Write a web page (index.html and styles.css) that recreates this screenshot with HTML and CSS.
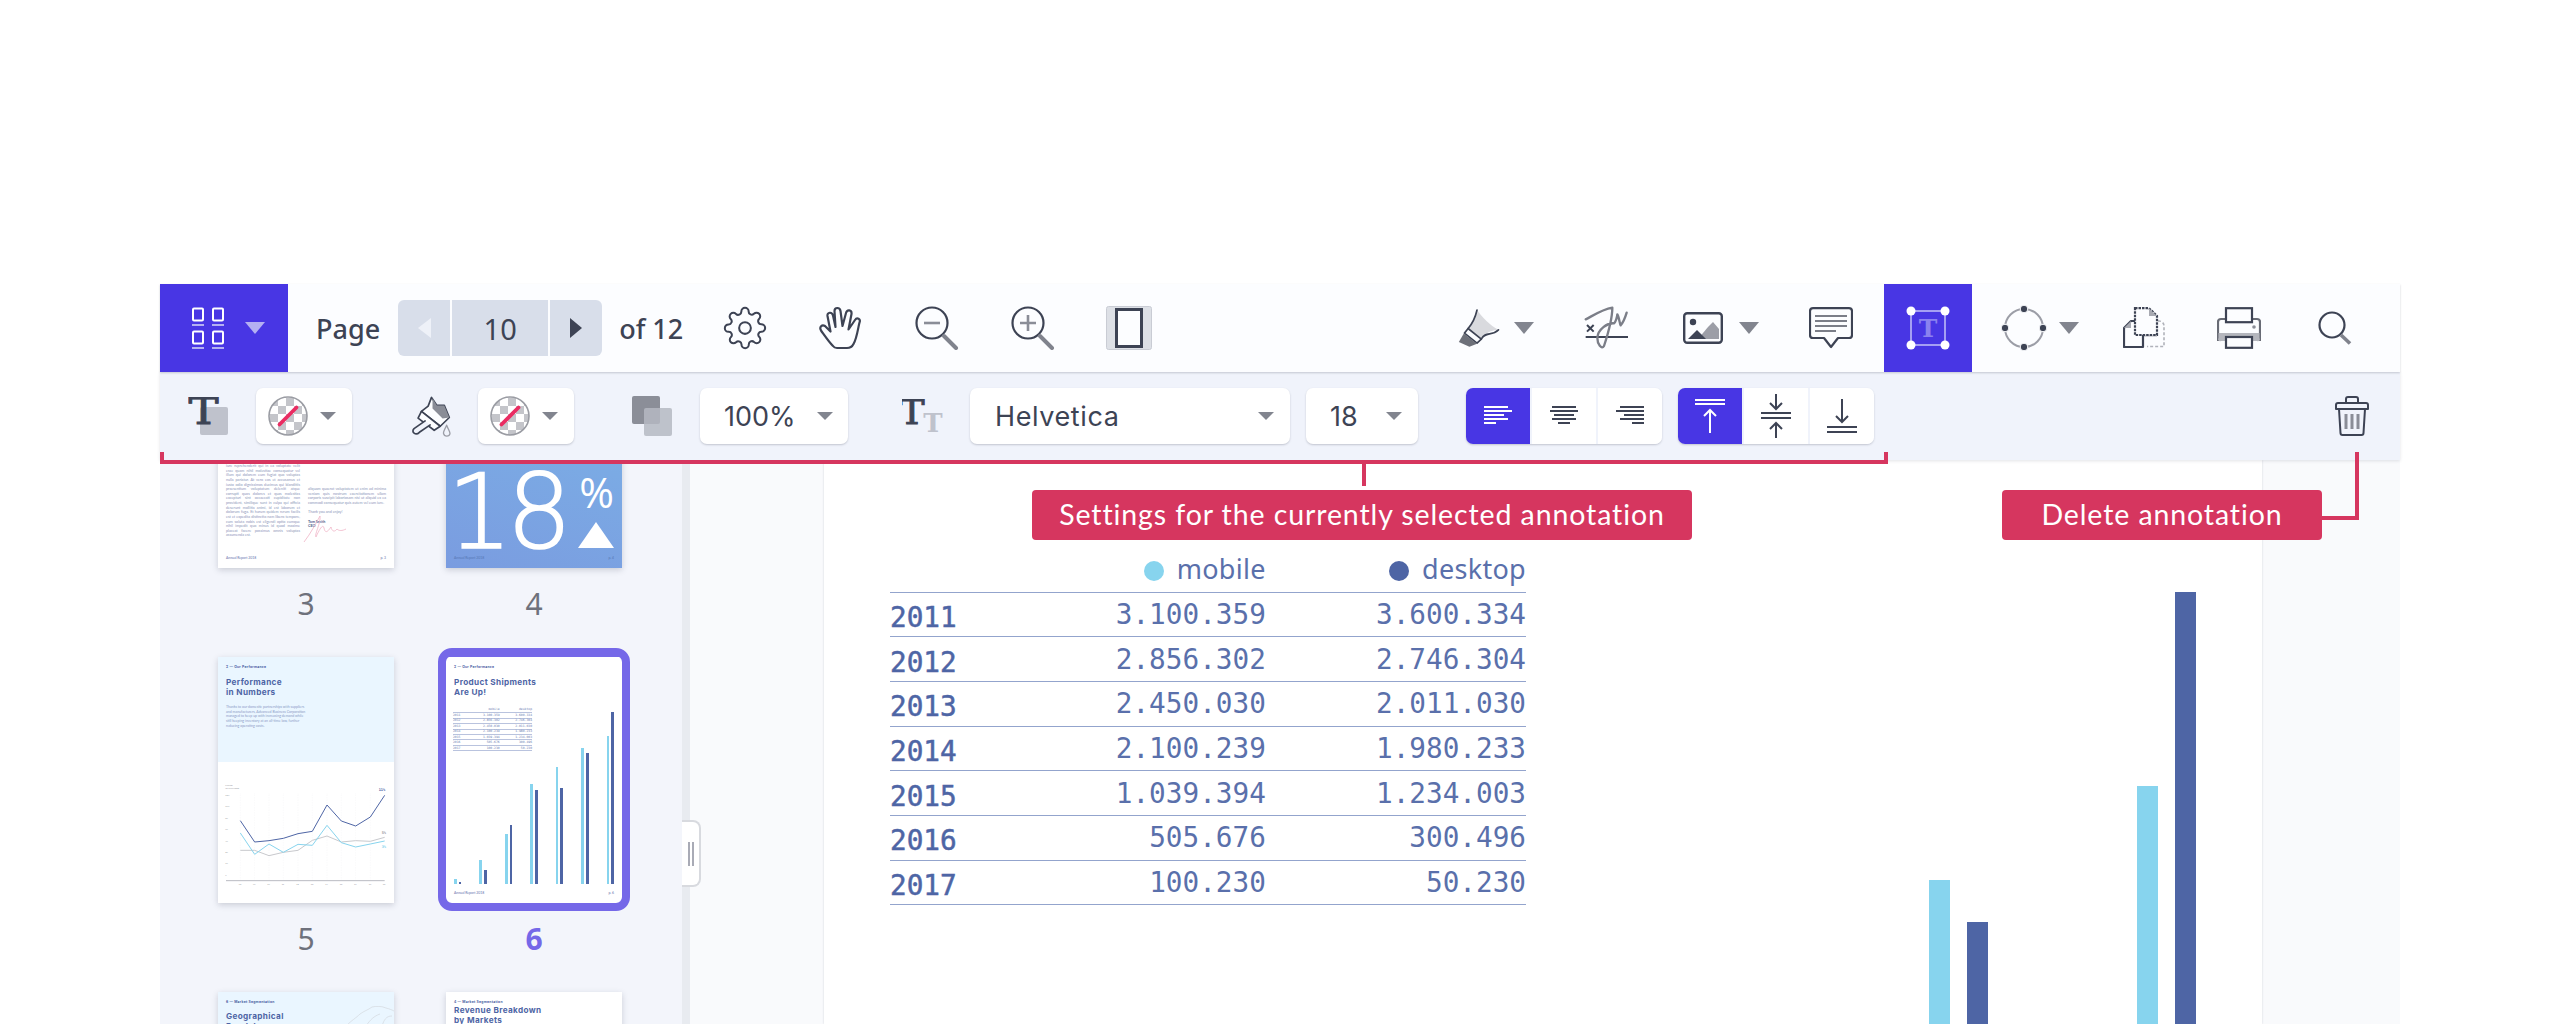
FILE: index.html
```html
<!DOCTYPE html>
<html lang="en">
  <head>
    <meta charset="UTF-8" />
    <title>PDF viewer annotation toolbar</title>
    <link rel="stylesheet" href="styles.css">
  </head>
  <body>
    <div class="app">
      <!-- main toolbar -->
      <div class="bar bar-main">
        <button class="grid-btn">
          <svg width="32" height="42" viewBox="0 0 32 42" fill="none" stroke="#fff" stroke-width="2">
            <rect x="1" y="1.5" width="10" height="12" rx="1"/><rect x="21" y="1.5" width="10" height="12" rx="1"/>
            <rect x="1" y="24.5" width="10" height="12" rx="1"/><rect x="21" y="24.5" width="10" height="12" rx="1"/>
            <path d="M0 18h12M20 18h12M0 41h12M20 41h12" stroke="#b4b0f2"/>
          </svg>
          <i class="caret caret-lg caret-light"></i>
        </button>
        <span class="page-word">Page</span>
        <div class="stepper">
          <span class="step"><i class="tri tri-left"></i></span>
          <span class="step step-num">10</span>
          <span class="step"><i class="tri tri-right"></i></span>
        </div>
        <span class="page-of">of 12</span>
        <span class="tool">
          <svg width="44" height="44" viewBox="0 0 24 24" fill="none" stroke="#3d4354" stroke-width="1.1" stroke-linejoin="round"><circle cx="12" cy="12" r="3.2"/><path d="M19.4 15a1.65 1.65 0 0 0 .33 1.82l.06.06a2 2 0 0 1 0 2.83 2 2 0 0 1-2.83 0l-.06-.06a1.65 1.65 0 0 0-1.82-.33 1.65 1.65 0 0 0-1 1.51V21a2 2 0 0 1-2 2 2 2 0 0 1-2-2v-.09A1.65 1.65 0 0 0 9 19.4a1.65 1.65 0 0 0-1.82.33l-.06.06a2 2 0 0 1-2.83 0 2 2 0 0 1 0-2.83l.06-.06a1.65 1.65 0 0 0 .33-1.82 1.65 1.65 0 0 0-1.51-1H3a2 2 0 0 1-2-2 2 2 0 0 1 2-2h.09A1.65 1.65 0 0 0 4.6 9a1.65 1.65 0 0 0-.33-1.82l-.06-.06a2 2 0 0 1 0-2.83 2 2 0 0 1 2.83 0l.06.06a1.65 1.65 0 0 0 1.82.33H9a1.65 1.65 0 0 0 1-1.51V3a2 2 0 0 1 2-2 2 2 0 0 1 2 2v.09a1.65 1.65 0 0 0 1 1.51 1.65 1.65 0 0 0 1.82-.33l.06-.06a2 2 0 0 1 2.83 0 2 2 0 0 1 0 2.83l-.06.06a1.65 1.65 0 0 0-.33 1.82V9a1.65 1.65 0 0 0 1.51 1H21a2 2 0 0 1 2 2 2 2 0 0 1-2 2h-.09a1.65 1.65 0 0 0-1.51 1z"/></svg>
        </span>
        <span class="tool">
          <svg width="44" height="44" viewBox="0 0 44 44" fill="none" stroke="#3d4354" stroke-width="2.2" stroke-linejoin="round" stroke-linecap="round"><path d="M14 40C10 36 6 30 2 24.5C0 21 3 18 6 20L11.5 25.5L8.5 10C8 6 13 5.5 14 9.5L16.5 21L15.5 5C15.5 1 21 1 21.5 5L23.5 20L27 7C28 3 33 3.5 32.5 8L29.5 23.5L36 14C38 11 42 13 40.5 16.5C39 22 38 32 34.5 38C33 41 30 42 28 42L18 42C16.5 42 15 41.5 14 40Z"/></svg>
        </span>
        <span class="tool">
          <svg width="44" height="44" viewBox="0 0 44 44" fill="none"><circle cx="17" cy="17" r="15.5" stroke="#3d4354" stroke-width="2.2"/><path d="M9 17h16" stroke="#8a8d97" stroke-width="2.6"/><path d="M29 30l12 12" stroke="#80838d" stroke-width="4" stroke-linecap="round"/></svg>
        </span>
        <span class="tool">
          <svg width="44" height="44" viewBox="0 0 44 44" fill="none"><circle cx="17" cy="17" r="15.5" stroke="#3d4354" stroke-width="2.2"/><path d="M9 17h16M17 9v16" stroke="#8a8d97" stroke-width="2.6"/><path d="M29 30l12 12" stroke="#80838d" stroke-width="4" stroke-linecap="round"/></svg>
        </span>
        <span class="tool">
          <svg width="46" height="44" viewBox="0 0 46 44"><rect x="0.5" y="0.5" width="45" height="43" rx="2" fill="#dde0e6" stroke="#c9ccd4"/><rect x="10.5" y="3.500" width="25" height="37" fill="#fcfdff" stroke="#3d4354" stroke-width="3"/></svg>
        </span>

        <div class="bar-right">
          <span class="tool-flex tool-hl">
            <svg width="42" height="38" viewBox="28 25 126 115" fill="none" stroke="#3d4354" stroke-width="5" stroke-linejoin="round" stroke-linecap="round"><path d="M85 28C80 50 72 68 58 84L98 116C105 100 125 90 150 88C125 75 100 50 85 28Z" fill="#d9dade" stroke="none"/><path d="M85 28C80 50 72 68 58 84M98 116C110 92 130 108 150 88"/><path d="M58 84L98 116L85 128L47 98Z" fill="#fcfdff"/><path d="M45 99L85 130L62 139L30 125Z" fill="#6d7079" stroke="none"/></svg>
            <i class="caret caret-lg"></i>
          </span>
          <span class="tool-flex tool-sign">
            <svg width="45" height="45" viewBox="405 20 135 135" fill="none"><path d="M410 113H537" stroke="#3d4354" stroke-width="6"/><path d="M414 77l20 20M434 77l-20 20" stroke="#3d4354" stroke-width="6"/><path d="M410 60C430 50 460 30 490 25C490 50 478 100 465 140C458 152 445 135 445 115C447 90 475 70 495 72C500 70 505 50 505 45C510 50 512 75 515 78C522 70 530 50 533 40" stroke="#7b7e88" stroke-width="7" stroke-linejoin="round" stroke-linecap="round"/></svg>
          </span>
          <span class="tool-flex tool-img">
            <svg width="40" height="32" viewBox="0 0 40 32"><rect x="1.2" y="1.2" width="37.6" height="29.6" rx="3" fill="none" stroke="#3d4354" stroke-width="2.4"/><circle cx="10" cy="10" r="3.2" fill="#3d4354"/><path d="M15 27L25 15L30 10L36 17V27Z" fill="#9c9ea7"/><path d="M5 27L14 18L23 27Z" fill="#3d4354"/></svg>
            <i class="caret caret-lg"></i>
          </span>
          <span class="tool-flex tool-note">
            <svg width="44" height="42" viewBox="0 0 44 42" fill="none"><path d="M4 1.2H40A3 3 0 0 1 43 4.200V28A3 3 0 0 1 40 31H29L22 40L15 31H4A3 3 0 0 1 1 28V4.200A3 3 0 0 1 4 1.200Z" stroke="#3d4354" stroke-width="2.200" stroke-linejoin="round"/><path d="M6 9h32M6 14h32M6 19h32M6 24h21" stroke="#7b7e88" stroke-width="2"/></svg>
          </span>
          <span class="tool-box">
            <svg width="48" height="48" viewBox="0 0 48 48"><rect x="7" y="7" width="34" height="34" fill="none" stroke="#a59ff3" stroke-width="2"/><text x="24" y="33" text-anchor="middle" class="icon-t" font-size="25" fill="#8b82ef">T</text><circle cx="7" cy="7" r="4.500" fill="#fff"/><circle cx="41" cy="7" r="4.500" fill="#fff"/><circle cx="7" cy="41" r="4.500" fill="#fff"/><circle cx="41" cy="41" r="4.500" fill="#fff"/></svg>
          </span>
          <span class="tool-flex tool-shape">
            <svg width="46" height="46" viewBox="0 0 46 46" fill="none"><circle cx="23" cy="23" r="19" stroke="#9c9ea7" stroke-width="2"/><g fill="#3d4354"><circle cx="23" cy="4" r="3.800" stroke="#fcfdff" stroke-width="1"/><circle cx="23" cy="42" r="3.800" stroke="#fcfdff" stroke-width="1"/><circle cx="4" cy="23" r="3.800" stroke="#fcfdff" stroke-width="1"/><circle cx="42" cy="23" r="3.800" stroke="#fcfdff" stroke-width="1"/></g></svg>
            <i class="caret caret-xl"></i>
          </span>
          <span class="tool-flex tool-copy">
            <svg width="42" height="42" viewBox="0 0 42 42" fill="none"><path d="M14 14H34V30H14Z" fill="#d4d5da"/><path d="M30 14h6a5 5 0 0 1 5 5v20.500H24" stroke="#b0b2ba" stroke-width="1.600" stroke-dasharray="3 2"/><path d="M8 14H20V40H1V21Z" fill="#fcfdff" stroke="#3d4354" stroke-width="2.200" stroke-linejoin="round"/><path d="M8 14L1 21H8Z" fill="#a8aab2"/><path d="M12 1.200H26L34 9V28H12Z" fill="#fcfdff" stroke="#3d4354" stroke-width="2.200" stroke-dasharray="2.500 1"/><path d="M26 1.200V9H34Z" fill="#a8aab2"/></svg>
          </span>
          <span class="tool-flex tool-print">
            <svg width="44" height="42" viewBox="0 0 44 42" fill="none"><path d="M4 12H40A3 3 0 0 1 43 15V33H1V15A3 3 0 0 1 4 12Z" fill="#fcfdff" stroke="#686b75" stroke-width="2.200"/><path d="M1.500 26H42.500V31A2 2 0 0 1 40 34H4A2 2 0 0 1 1.500 31Z" fill="#b4b6bd"/><rect x="9" y="1.200" width="26" height="14" fill="#fcfdff" stroke="#3d4354" stroke-width="2.200"/><rect x="9" y="30" width="26" height="10.800" fill="#fcfdff" stroke="#3d4354" stroke-width="2.200"/><circle cx="37" cy="20" r="1.800" fill="#8a8d97"/></svg>
          </span>
          <span class="tool-flex tool-find">
            <svg width="34" height="34" viewBox="0 0 34 34" fill="none"><circle cx="14" cy="14" r="12.500" stroke="#3d4354" stroke-width="2.200"/><path d="M23 24l9 8.500" stroke="#80838d" stroke-width="3.600"/></svg>
          </span>
        </div>
      </div>

      <!-- annotation settings -->
      <div class="bar bar-sub">
        <svg class="ic-text" width="40" height="38" viewBox="0 0 40 38"><rect x="12" y="10" width="28" height="28" rx="2" fill="#bfc2cc"/><text transform="translate(15.5 27) scale(1.22 1)" text-anchor="middle" class="icon-t icon-t-dark" font-size="37">T</text></svg>
        <div class="ctl ctl-pick">
          <svg width="40" height="40" viewBox="0 0 40 40"><defs><pattern id="chk" x="2" y="2" width="16" height="16" patternUnits="userSpaceOnUse"><rect width="16" height="16" fill="#fff"/><rect width="8" height="8" fill="#c4c5ca"/><rect x="8" y="8" width="8" height="8" fill="#c4c5ca"/></pattern></defs><circle cx="20" cy="20" r="19" fill="url(#chk)" stroke="#9a9ca3" stroke-width="1.600"/><path d="M11.500 28.500L28.500 11.500" stroke="#ea2c62" stroke-width="3.800" stroke-linecap="round"/></svg>
          <i class="caret"></i>
        </div>
        <svg class="ic-paint" width="42" height="42" viewBox="688 15 125 125" fill="none" stroke="#3d4354" stroke-width="5" stroke-linejoin="round" stroke-linecap="round"><path d="M752 22L742 48L722 64L778 108L805 82L790 46L768 46Z" fill="#fcfdff"/><path d="M755 25L768 46L790 46L805 82L785 85L755 55Z" fill="#8a8d97" stroke="none"/><path d="M722 64L712 84L760 120L778 108Z" fill="#fcfdff"/><path d="M733 92L700 115C690 125 705 137 716 126L748 104" fill="#f0f3fb"/><path d="M797 105C790 120 786 125 788 130C790 140 805 140 807 130C808 125 803 120 797 105Z" stroke="#9c9ea7" stroke-width="4"/></svg>
        <div class="ctl ctl-pick ctl-pick-2">
          <svg width="40" height="40" viewBox="0 0 40 40"><circle cx="20" cy="20" r="19" fill="url(#chk)" stroke="#9a9ca3" stroke-width="1.600"/><path d="M11.500 28.500L28.500 11.500" stroke="#ea2c62" stroke-width="3.800" stroke-linecap="round"/></svg>
          <i class="caret"></i>
        </div>
        <svg class="ic-opacity" width="40" height="40" viewBox="0 0 40 40"><rect x="0" y="0" width="28" height="28" rx="2" fill="#8b8e98"/><rect x="12" y="12" width="28" height="28" rx="2" fill="#b5b8c2" fill-opacity="0.85"/></svg>
        <div class="ctl ctl-pct"><span>100%</span><i class="caret"></i></div>
        <svg class="ic-size" width="42" height="34" viewBox="0 0 42 34"><text transform="translate(10 25) scale(1.15 1)" text-anchor="middle" class="icon-t icon-t-dark" font-size="33">T</text><text x="31" y="33" text-anchor="middle" class="icon-t" font-size="26" fill="#bfc2cc">T</text></svg>
        <div class="ctl ctl-font"><span>Helvetica</span><i class="caret"></i></div>
        <div class="ctl ctl-num"><span>18</span><i class="caret"></i></div>

        <div class="seg seg-h">
          <span class="seg-btn active"><svg width="28" height="20" viewBox="0 0 28 20" fill="#fff"><rect width="24" height="2"/><rect y="4" width="28" height="2"/><rect y="8" width="20" height="2"/><rect y="12" width="24" height="2"/><rect y="16" width="12" height="2"/></svg></span>
          <span class="seg-btn"><svg width="28" height="20" viewBox="0 0 28 20" fill="#3d4354"><rect x="2" width="24" height="2"/><rect y="4" width="28" height="2"/><rect x="4" y="8" width="20" height="2"/><rect x="2" y="12" width="24" height="2"/><rect x="8" y="16" width="12" height="2"/></svg></span>
          <span class="seg-btn"><svg width="28" height="20" viewBox="0 0 28 20" fill="#3d4354"><rect x="4" width="24" height="2"/><rect y="4" width="28" height="2"/><rect x="8" y="8" width="20" height="2"/><rect x="4" y="12" width="24" height="2"/><rect x="16" y="16" width="12" height="2"/></svg></span>
        </div>
        <div class="seg seg-v">
          <span class="seg-btn active"><svg width="30" height="34" viewBox="0 0 30 34" fill="none" stroke="#fff" stroke-width="2"><path d="M0 1h30M0 5h30M15 34V11M9 17l6-6 6 6"/></svg></span>
          <span class="seg-btn"><svg width="30" height="44" viewBox="0 0 30 44" fill="none" stroke="#3d4354" stroke-width="2"><path d="M0 19h30M0 24h30M15 0v15M9 9l6 6 6-6M15 44V29M9 35l6-6 6 6"/></svg></span>
          <span class="seg-btn"><svg width="30" height="34" viewBox="0 0 30 34" fill="none" stroke="#3d4354" stroke-width="2"><path d="M0 28h30M0 33h30M15 0v23M9 17l6 6 6-6"/></svg></span>
        </div>
        <svg class="ic-trash" width="34" height="40" viewBox="0 0 34 40" fill="none" stroke="#3d4354" stroke-width="2" stroke-linejoin="round"><path d="M11 7V3A2 2 0 0 1 13 1H21A2 2 0 0 1 23 3V7"/><path d="M3 7H31A2 2 0 0 1 33 9V13H1V9A2 2 0 0 1 3 7Z"/><path d="M4 13L5.500 37A2 2 0 0 0 7.500 39H26.500A2 2 0 0 0 28.500 37L30 13"/><path d="M11 18V33M17 18V33M23 18V33" stroke="#8a8d97" stroke-width="3"/></svg>
      </div>

      <div class="content">
        <aside class="sidebar">
          <div class="thumbs">
            <div class="cell">
              <div class="thumb thumb-letter">
                <div class="letter-cols">
                  <p>nostrum exercitationem ullam corporis suscipit laboriosam, nisi ut aliquid ex ea commodi consequatur quis autem vel eum iure reprehenderit qui in ea voluptate velit esse quam nihil molestiae consequatur vel illum qui dolorem eum fugiat quo voluptas nulla pariatur. At vero eos et accusamus et iusto odio dignissimos ducimus qui blanditiis praesentium voluptatum deleniti atque corrupti quos dolores et quas molestias excepturi sint occaecati cupiditate non provident, similique sunt in culpa qui officia deserunt mollitia animi, id est laborum et dolorum fuga. Et harum quidem rerum facilis est et expedita distinctio nam libero tempore, cum soluta nobis est eligendi optio cumque nihil impedit quo minus id quod maxime placeat facere possimus omnis voluptas assumenda est.</p>
                  <p>aliquam quaerat voluptatem ut enim ad minima veniam quis nostrum exercitationem ullam corporis suscipit laboriosam nisi ut aliquid ex ea commodi consequatur quis autem vel eum iure.<br><br>Thank you and enjoy!<br><br><b>Tom Smith</b><br><b>CEO</b><br><br><br></p>
                </div>
                <svg class="scribble" width="44" height="28" viewBox="0 0 44 28" fill="none" stroke="#f0b4c6" stroke-width="0.8"><path d="M1 27C8 18 13 8 17 1C18 8 11 20 13 22C16 15 20 8 21 13C22 18 24 18 28 12C29 17 32 17 34 14C36 16 39 16 43 14"/></svg>
                <div class="thumb-foot"><span>Annual Report 2018</span><span>p. 3</span></div>
              </div>
              <div class="num">3</div>
            </div>
            <div class="cell">
              <div class="thumb thumb-stat">
                <div class="stat">
                  <span class="stat-big">18</span>
                  <div class="stat-side"><span class="stat-pct">%</span><i class="stat-up"></i></div>
                </div>
                <div class="thumb-foot"><span>Annual Report 2018</span><span>p. 4</span></div>
              </div>
              <div class="num">4</div>
            </div>
            <div class="cell">
              <div class="thumb">
                <div class="thumb-head tint">
                  <div class="kicker">2 — Our Performance</div>
                  <div class="title">Performance<br>in Numbers</div>
                  <p class="blurb">Thanks to our domestic partnerships with suppliers and manufacturers, Advanced Business Corporation managed to keep up with increasing demand while still keeping inventory at an all-time low, further reducing operating costs.</p>
                </div>
                <svg class="line-chart" width="176" height="141" viewBox="54 365 528 423" fill="none">
                  <path d="M121 460V720M164 460V720M207 460V720M250 460V720M294 460V720M337 460V720M381 460V720M424 460V720M467 460V720M511 460V720" stroke="#e6e7ea" stroke-dasharray="2 3"/>
                  <path d="M78 721H554" stroke="#b9bbc2" stroke-width="3"/>
                  <polyline points="121,630 164,630 207,646 250,636 294,630 337,600 381,587 424,605 467,601 511,603 554,591" stroke="#c8c9cd" stroke-width="3"/>
                  <polyline points="121,578 164,642 207,611 250,636 294,612 337,615 381,555 424,607 467,620 511,611 554,602" stroke="#87d4ee" stroke-width="3"/>
                  <polyline points="121,541 164,605 207,601 250,594 294,580 337,573 381,494 424,542 467,557 511,530 554,465" stroke="#4e65a5" stroke-width="3"/>
                  <g class="chart-lbl"><text x="536" y="453" fill="#4e65a5">11%</text><text x="545" y="580" fill="#9a9ca3">5%</text><text x="545" y="623" fill="#87d4ee">3%</text></g>
                  <g class="chart-axis"><text x="76" y="437">PRICE</text><text x="76" y="445">IN MILLIONS</text><text x="76" y="468">120</text><text x="76" y="501">100</text><text x="76" y="536">80</text><text x="76" y="570">60</text><text x="76" y="604">40</text><text x="76" y="638">20</text><text x="76" y="672">10</text><text x="76" y="706">0</text><text x="116" y="733">08</text><text x="159" y="733">09</text><text x="202" y="733">10</text><text x="245" y="733">11</text><text x="289" y="733">12</text><text x="332" y="733">13</text><text x="376" y="733">14</text><text x="419" y="733">15</text><text x="462" y="733">16</text><text x="506" y="733">17</text><text x="548" y="733">18</text></g>
                </svg>
              </div>
              <div class="num">5</div>
            </div>
            <div class="cell">
              <div class="thumb selected">
                <div class="thumb-head thumb-head-table">
                  <div class="kicker">2 — Our Performance</div>
                  <div class="title">Product Shipments<br>Are Up!</div>
                  <table class="mini">
                    <tr><th></th><td>mobile</td><td>desktop</td></tr>
                    <tr><th>2011</th><td>3.100.359</td><td>3.600.334</td></tr>
                    <tr><th>2012</th><td>2.856.302</td><td>2.746.304</td></tr>
                    <tr><th>2013</th><td>2.450.030</td><td>2.011.030</td></tr>
                    <tr><th>2014</th><td>2.100.239</td><td>1.980.233</td></tr>
                    <tr><th>2015</th><td>1.039.394</td><td>1.234.003</td></tr>
                    <tr><th>2016</th><td>505.676</td><td>300.496</td></tr>
                    <tr><th>2017</th><td>100.230</td><td>50.230</td></tr>
                  </table>
                </div>
                <div class="mini-bars">
                  <div class="pair"><i class="lt" style="height:5px"></i><i class="dk" style="height:2px"></i></div>
                  <div class="pair"><i class="lt" style="height:24px"></i><i class="dk" style="height:14px"></i></div>
                  <div class="pair"><i class="lt" style="height:50px"></i><i class="dk" style="height:59px"></i></div>
                  <div class="pair"><i class="lt" style="height:100px"></i><i class="dk" style="height:94px"></i></div>
                  <div class="pair"><i class="lt" style="height:117px"></i><i class="dk" style="height:96px"></i></div>
                  <div class="pair"><i class="lt" style="height:136px"></i><i class="dk" style="height:131px"></i></div>
                  <div class="pair"><i class="lt" style="height:148px"></i><i class="dk" style="height:172px"></i></div>
                </div>
                <div class="thumb-foot"><span>Annual Report 2018</span><span>p. 6</span></div>
              </div>
              <div class="num num-on">6</div>
            </div>
            <div class="cell">
              <div class="thumb tint">
                <div class="kicker">6 — Market Segmentation</div>
                <div class="title title-geo">Geographical<br>Breakdown</div>
                <svg class="map" width="48" height="20" viewBox="0 0 48 20" fill="none" stroke="#d4d8de" stroke-width="0.7"><path d="M0 20C6 14 10 12 14 8C18 5 22 4 26 1C30 0 36 0 40 2C44 3 46 4 48 5M20 20C24 14 28 10 34 8M36 20C38 14 40 10 46 10"/></svg>
              </div>
            </div>
            <div class="cell">
              <div class="thumb">
                <div class="kicker">4 — Market Segmentation</div>
                <div class="title title-rev">Revenue Breakdown<br>by Markets</div>
              </div>
            </div>
          </div>
        </aside>

        <main class="viewer">
          <span class="grip"><i></i><i></i></span>
          <section class="page">
            <table class="shipments">
              <thead>
                <tr><th></th><td><i class="dot dot-m"></i>mobile</td><td><i class="dot dot-d"></i>desktop</td></tr>
              </thead>
              <tbody>
                <tr><th>2011</th><td>3.100.359</td><td>3.600.334</td></tr>
                <tr><th>2012</th><td>2.856.302</td><td>2.746.304</td></tr>
                <tr><th>2013</th><td>2.450.030</td><td>2.011.030</td></tr>
                <tr><th>2014</th><td>2.100.239</td><td>1.980.233</td></tr>
                <tr><th>2015</th><td>1.039.394</td><td>1.234.003</td></tr>
                <tr><th>2016</th><td>505.676</td><td>300.496</td></tr>
                <tr><th>2017</th><td>100.230</td><td>50.230</td></tr>
              </tbody>
            </table>
            <div class="bars">
              <div class="bar-pair"><i class="lt" style="height:144px"></i><i class="dk" style="height:102px"></i></div>
              <div class="bar-pair"><i class="lt" style="height:238px"></i><i class="dk" style="height:432px"></i></div>
            </div>
          </section>
        </main>
      </div>

      <!-- callouts -->
      <div class="bracket"></div>
      <div class="callout callout-settings">Settings for the currently selected annotation</div>
      <div class="callout callout-delete">Delete annotation</div>
    </div>
  </body>
</html>
```

FILE: styles.css
```css
* {
  box-sizing: border-box;
}

html,
body {
  margin: 0;
  height: 1024px;
  overflow: hidden;
  background: #fff;
}

body {
  font-family: "Noto Sans", sans-serif;
  color: #3d4354;
}

.app {
  position: relative;
  width: 2240px;
  height: 740px;
  margin: 284px 0 0 160px;
  display: flex;
  flex-direction: column;
}

.bar {
  display: flex;
  align-items: center;
  height: 88px;
  flex: none;
  position: relative;
}

.bar-main {
  background: #fcfdff;
  box-shadow: 0 1px 2px rgba(60, 65, 85, 0.25);
  z-index: 3;
}

.bar-sub {
  background: #f0f3fb;
  box-shadow: 0 1px 3px rgba(60, 65, 85, 0.15);
  z-index: 2;
  padding: 0 31px 0 28px;
}

.bar-right {
  margin-left: auto;
  display: flex;
  align-items: center;
  height: 100%;
}

svg {
  display: block;
  flex: none;
}

.icon-t {
  font-family: "DejaVu Serif", serif;
  font-weight: 700;
}

.icon-t-dark {
  font-weight: 400;
  fill: #3d4354;
  stroke: #3d4354;
  stroke-width: 0.9px;
}

/* carets */
.caret {
  display: block;
  flex: none;
  width: 0;
  height: 0;
  border-left: 8px solid transparent;
  border-right: 8px solid transparent;
  border-top: 8px solid #82858f;
}

.caret-lg {
  border-left-width: 10px;
  border-right-width: 10px;
  border-top-width: 12px;
}

.caret-xl {
  border-left-width: 10px;
  border-right-width: 10px;
  border-top-width: 12px;
}

.caret-light {
  border-top-color: #b4b0f2;
}

/* main toolbar */
.grid-btn {
  width: 128px;
  height: 88px;
  border: none;
  padding: 0 0 0 32px;
  background: #4836e4;
  display: flex;
  align-items: center;
  gap: 21px;
}

.page-word {
  margin-left: 28px;
  font-size: 27px;
  font-weight: 500;
}

.stepper {
  margin-left: 18px;
  display: flex;
  gap: 2px;
  height: 56px;
  border-radius: 6px;
  overflow: hidden;
}

.step {
  width: 52px;
  background: #d8deea;
  display: flex;
  align-items: center;
  justify-content: center;
}

.step-num {
  width: 96px;
  font-size: 29px;
}

.tri {
  display: block;
  border-top: 10px solid transparent;
  border-bottom: 10px solid transparent;
}

.tri-left {
  border-right: 13px solid #eef1f8;
}

.tri-right {
  border-left: 12px solid #3d4354;
}

.page-of {
  margin: 0 14px 0 17px;
  font-size: 27px;
  font-weight: 500;
}

.tool {
  width: 96px;
  display: flex;
  justify-content: center;
}

.tool-flex {
  display: flex;
  align-items: center;
}

.tool-hl {
  gap: 14px;
}

.tool-sign {
  margin-left: 50px;
}

.tool-img {
  margin-left: 54px;
  gap: 16px;
}

.tool-note {
  margin-left: 50px;
}

.tool-box {
  margin-left: 31px;
  width: 88px;
  height: 88px;
  background: #4836e4;
  display: flex;
  align-items: center;
  justify-content: center;
}

.tool-shape {
  margin-left: 29px;
  gap: 12px;
}

.tool-copy {
  margin-left: 44px;
}

.tool-print {
  margin-left: 52px;
}

.tool-find {
  margin: 0 48px 0 57px;
}

/* annotation settings */
.ctl {
  height: 56px;
  background: #fff;
  border-radius: 7px;
  box-shadow: 0 1px 2px rgba(60, 65, 85, 0.25);
  display: flex;
  align-items: center;
  font-family: Inter, sans-serif;
  font-size: 27px;
  flex: none;
}

.ctl span {
  flex: 1;
}

.ctl-pick {
  width: 96px;
  margin-left: 28px;
  padding: 0 16px 0 12px;
  gap: 12px;
}

.ctl-pick-2 {
  margin-left: 26px;
}

.ic-paint {
  margin-left: 58px;
}

.ic-opacity {
  margin-left: 58px;
}

.ctl-pct {
  width: 148px;
  margin-left: 28px;
  padding: 0 15px 0 24px;
}

.ic-size {
  margin-left: 54px;
}

.ctl-font {
  width: 320px;
  margin-left: 26px;
  padding: 0 16px 0 25px;
  letter-spacing: 0.6px;
}

.ctl-num {
  width: 112px;
  margin-left: 16px;
  padding: 0 16px 0 24px;
}

.seg {
  display: flex;
  gap: 2px;
  height: 56px;
  margin-left: 16px;
  border-radius: 7px;
  overflow: hidden;
  box-shadow: 0 1px 2px rgba(60, 65, 85, 0.25);
}

.seg-h {
  margin-left: 48px;
}

.seg-btn {
  width: 64px;
  background: #fff;
  display: flex;
  align-items: center;
  justify-content: center;
}

.seg-btn.active {
  background: #4836e4;
}

.ic-trash {
  margin-left: auto;
}

/* sidebar + viewer */
.content {
  flex: 1;
  min-height: 0;
  display: flex;
}

.sidebar {
  width: 530px;
  flex: none;
  background: #f3f5fb;
  border-right: 8px solid #e8ebf0;
  padding-left: 58px;
  overflow: hidden;
}

.thumbs {
  margin-top: -138px;
  display: grid;
  grid-template-columns: 176px 176px;
  column-gap: 52px;
  row-gap: 17px;
}

.thumb {
  position: relative;
  width: 176px;
  height: 246px;
  background: #fff;
  box-shadow: 0 2px 6px rgba(60, 65, 85, 0.22);
  display: flex;
  flex-direction: column;
  overflow: hidden;
}

.thumb.selected {
  overflow: visible;
  box-shadow: 0 0 0 4px #7568e8;
}

.selected::before {
  content: "";
  position: absolute;
  inset: -9px -8px -8px;
  border: 8px solid #7568e8;
  border-radius: 14px;
}

.num {
  height: 72px;
  line-height: 72px;
  text-align: center;
  font-size: 30px;
  color: #6e717c;
}

.num-on {
  color: #7568e8;
  font-weight: 700;
}

.tint {
  background: #eaf6ff;
}

.kicker {
  margin: 8px 0 0 8px;
  font-family: Inter, sans-serif;
  font-size: 3.4px;
  line-height: 5px;
  font-weight: 700;
  letter-spacing: 0.25px;
  color: #4e65a5;
}

.title {
  margin: 7px 0 0 8px;
  font-family: Inter, sans-serif;
  font-size: 8.2px;
  line-height: 10.4px;
  font-weight: 700;
  letter-spacing: 0.35px;
  color: #4e65a5;
}

.title-geo {
  margin-top: 6px;
}

.title-rev {
  margin-top: 0;
}

.map {
  position: absolute;
  right: 0;
  top: 14px;
}

.blurb {
  margin: 7px 0 0 8px;
  width: 80px;
  font-family: Lato, sans-serif;
  font-size: 3.5px;
  line-height: 4.7px;
  color: #8a9ac6;
}

.thumb-head {
  height: 105px;
  flex: none;
}

.thumb-head-table {
  height: 55px;
}

.line-chart {
  flex: none;
}

.chart-lbl {
  font-family: "DejaVu Sans Mono", monospace;
  font-size: 11px;
  font-weight: 700;
}

.chart-axis {
  font-family: "Liberation Sans", sans-serif;
  font-size: 7px;
  fill: #9a9ca3;
}

.thumb-foot {
  flex: none;
  height: 19px;
  padding: 7px 8px 0;
  display: flex;
  justify-content: space-between;
  font-family: Lato, sans-serif;
  font-size: 3.4px;
  line-height: 5px;
  color: #5f74ad;
}

.thumb-letter,
.thumb-stat {
  justify-content: flex-end;
}

.letter-cols {
  flex: none;
  margin-bottom: 11px;
  padding: 0 8px;
  display: grid;
  grid-template-columns: 74px 78px;
  column-gap: 8px;
  align-items: end;
}

.letter-cols p {
  margin: 0;
  font-family: Lato, sans-serif;
  font-size: 3.7px;
  line-height: 4.63px;
  text-align: justify;
  color: #8a94b8;
}

.letter-cols b {
  color: #4e5c8a;
}

.scribble {
  position: absolute;
  left: 85px;
  bottom: 25px;
}

.thumb-stat {
  background: linear-gradient(20deg, #7a9ce0, #7cb8e8);
}

.thumb-stat .thumb-foot {
  color: #5577b4;
}

.stat {
  flex: none;
  display: flex;
  align-items: flex-end;
  justify-content: space-between;
  padding: 0 8px;
  margin-bottom: -13px;
}

.stat-big {
  font-family: "DejaVu Sans", sans-serif;
  font-weight: 200;
  font-size: 103px;
  line-height: 100px;
  letter-spacing: -6px;
  color: #fff;
  -webkit-text-stroke: 1.6px #fff;
  margin-left: -7px;
}

.stat-side {
  display: flex;
  flex-direction: column;
  align-items: flex-end;
  gap: 14px;
  margin-bottom: 14px;
}

.stat-pct {
  font-family: "Open Sans", sans-serif;
  font-size: 42px;
  line-height: 32px;
  color: #fff;
}

.stat-up {
  display: block;
  border-left: 18.5px solid transparent;
  border-right: 18.5px solid transparent;
  border-bottom: 26px solid #fff;
}

.mini {
  margin: 9.5px 0 0 7px;
  width: 79px;
  border-collapse: collapse;
  font-family: "DejaVu Sans Mono", monospace;
  font-size: 3.1px;
  color: #6a7db2;
}

.mini th,
.mini td {
  padding: 0;
  height: 5.45px;
  line-height: 3px;
  text-align: right;
  font-weight: 400;
  border-bottom: 0.7px solid #b9c3de;
}

.mini th {
  text-align: left;
}

.mini-bars {
  margin-top: auto;
  padding: 0 8px;
  display: flex;
  justify-content: space-between;
  align-items: flex-end;
}

.pair {
  display: flex;
  align-items: flex-end;
  gap: 2px;
}

.pair i {
  display: block;
  width: 2.7px;
}

.lt {
  background: #87d4ee;
}

.dk {
  background: #4e65a5;
}

.viewer {
  position: relative;
  flex: 1;
  min-width: 0;
  background: #f9fafc;
  padding: 0 138px 0 134px;
}

.grip {
  position: absolute;
  left: -8px;
  top: 360px;
  width: 19px;
  height: 67px;
  background: #fff;
  border: 2px solid #d8dadf;
  border-left: none;
  border-radius: 0 8px 8px 0;
  display: flex;
  align-items: center;
  justify-content: center;
  gap: 2px;
  z-index: 1;
}

.grip i {
  display: block;
  width: 2px;
  height: 24px;
  background: #a9abb6;
}

.page {
  height: 100%;
  background: #fff;
  box-shadow: 0 0 2px rgba(60, 65, 85, 0.2);
  padding: 80px 66px 0 66px;
  display: flex;
  justify-content: space-between;
  align-items: flex-start;
}

.shipments {
  width: 636px;
  border-collapse: collapse;
  font-family: "DejaVu Sans Mono", monospace;
  font-size: 27.7px;
  color: #5a70ab;
}

.shipments th,
.shipments td {
  padding: 0;
  text-align: right;
  font-weight: 400;
  border-bottom: 1.5px solid #93a4cd;
}

.shipments tbody tr {
  height: 44.7px;
}

.shipments thead tr {
  height: 52px;
}

.shipments thead td {
  font-family: "Noto Sans", sans-serif;
  font-size: 27px;
  letter-spacing: 0.3px;
  padding-top: 6px;
}

.shipments tbody th {
  text-align: left;
  color: #4e65a5;
  -webkit-text-stroke: 0.5px #4e65a5;
  padding-top: 6px;
}

.dot {
  display: inline-block;
  width: 20px;
  height: 20px;
  border-radius: 50%;
  margin-right: 13px;
  vertical-align: -2px;
}

.dot-m {
  background: #87d4ee;
}

.dot-d {
  background: #4e65a5;
}

.bars {
  flex: none;
  width: 267px;
  height: 432px;
  margin-top: 52px;
  display: flex;
  align-items: flex-end;
  justify-content: space-between;
}

.bar-pair {
  display: flex;
  align-items: flex-end;
  gap: 17px;
}

.bar-pair i {
  display: block;
  width: 21px;
}

/* callouts */
.bracket {
  position: absolute;
  left: 0;
  top: 168px;
  width: 1728px;
  height: 12px;
  border: 4px solid #d6365f;
  border-top: none;
  z-index: 4;
}

.bracket::after {
  content: "";
  position: absolute;
  left: 1198px;
  top: 8px;
  width: 4px;
  height: 26px;
  background: #d6365f;
}

.callout {
  position: absolute;
  top: 206px;
  height: 50px;
  line-height: 49px;
  background: #d6365f;
  border-radius: 4px;
  color: #fff;
  font-family: Lato, sans-serif;
  font-size: 28.5px;
  letter-spacing: 0.9px;
  text-align: center;
  z-index: 4;
}

.callout-settings {
  left: 872px;
  width: 660px;
}

.callout-delete {
  left: 1842px;
  width: 320px;
}

.callout-delete::after {
  content: "";
  position: absolute;
  left: 320px;
  top: -38px;
  width: 33px;
  height: 64px;
  border-right: 4px solid #d6365f;
  border-bottom: 4px solid #d6365f;
}
```
